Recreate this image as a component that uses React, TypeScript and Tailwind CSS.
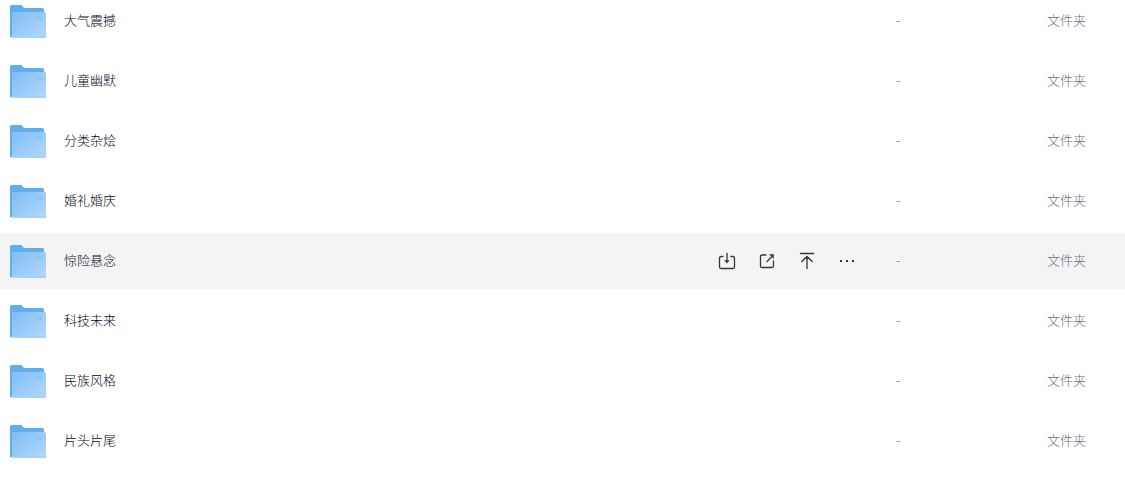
import React from "react";

const folders = [
  "大气震撼",
  "儿童幽默",
  "分类杂烩",
  "婚礼婚庆",
  "惊险悬念",
  "科技未来",
  "民族风格",
  "片头片尾",
];

const activeFolder = "惊险悬念";

const FolderIcon = () => {
  return (
    <svg width="36" height="34" viewBox="0 -1 36 34" className="shrink-0" aria-hidden="true">
      <defs>
        <linearGradient id="folder-front" x1="0" y1="0" x2="1" y2="1">
          <stop offset="0" stopColor="#7fbdf3" />
          <stop offset="1" stopColor="#b3d9fb" />
        </linearGradient>
      </defs>
      <path
        d="M0 1.5Q0 0 1.5 0H10.5Q11.8 0 12.6 1.2L14 3H32.5Q34 3 34 4.5V32H2Q0 33 0 31Z"
        fill="#62aeeb"
      />
      <path d="M2 8.5Q2 7 3.5 7H34.5Q36 7 36 8.5V31.5Q36 33 34.5 33H2Z" fill="url(#folder-front)" />
      <path d="M2 31H36V31.5Q36 33 34.5 33H2Z" fill="#a3d2f9" />
      <path d="M27 12.5H32M27 14.5H32" stroke="#82bff2" strokeWidth="1" />
    </svg>
  );
};

const iconProps = {
  width: 18,
  height: 18,
  viewBox: "0 0 18 18",
  fill: "none",
  stroke: "#33353f",
  strokeWidth: 1.3,
  strokeLinecap: "round" as const,
  strokeLinejoin: "round" as const,
};

const actions = [
  {
    label: "下载",
    icon: (
      <svg {...iconProps}>
        <path d="M5 4.5H3Q1.5 4.5 1.5 6V15Q1.5 16.5 3 16.5H15Q16.5 16.5 16.5 15V6Q16.5 4.5 15 4.5H13" />
        <path d="M9 1.5V9" />
        <path d="M7 8.5H11L9 11Z" fill="#33353f" strokeWidth="0.6" />
      </svg>
    ),
  },
  {
    label: "分享",
    icon: (
      <svg {...iconProps}>
        <path d="M8 3H4Q2.5 3 2.5 4.5V14Q2.5 15.5 4 15.5H14Q15.5 15.5 15.5 14V9" />
        <path d="M9 9.5L14 4.5" />
        <path d="M12 2.5H15.5V6Z" fill="#33353f" strokeWidth="0.6" />
      </svg>
    ),
  },
  {
    label: "置顶",
    icon: (
      <svg {...iconProps}>
        <path d="M2.5 1.5H15.5M9 5V16.5M3.8 9.5L9 4.5L14.2 9.5" />
      </svg>
    ),
  },
  {
    label: "更多",
    icon: (
      <svg {...iconProps} stroke="none" fill="#23252f">
        <rect x="2" y="8" width="2" height="2" rx="0.5" />
        <rect x="8" y="8" width="2" height="2" rx="0.5" />
        <rect x="14" y="8" width="2" height="2" rx="0.5" />
      </svg>
    ),
  },
];

const FolderRow = ({ name, active }: { name: string; active: boolean }) => {
  return (
    <tr className={active ? "h-14 bg-[#f4f4f4]" : "h-14"}>
      <td className="p-0">
        <div className="flex items-center pl-2.5 pr-10">
          <FolderIcon />
          <a href="#" className="ml-[18px] pb-0.5 text-[#03081a]">
            {name}
          </a>
          {active && (
            <div className="ml-auto flex gap-[22px]">
              {actions.map((action) => (
                <button key={action.label} type="button" aria-label={action.label} className="cursor-pointer">
                  {action.icon}
                </button>
              ))}
            </div>
          )}
        </div>
      </td>
      <td className="p-0 pb-0.5 text-[#6b7084]">-</td>
      <td className="p-0 pb-0.5 text-[#6b7084]">文件夹</td>
    </tr>
  );
};

const App = () => {
  return (
    <main className="overflow-hidden bg-white font-['Noto_Sans_CJK_SC',sans-serif] text-[13px] leading-5 font-light">
      <table className="-mt-[11px] w-full table-fixed border-separate border-spacing-x-0 border-spacing-y-1 text-left">
        <colgroup>
          <col />
          <col className="w-[151px]" />
          <col className="w-[78px]" />
        </colgroup>
        <tbody>
          {folders.map((name) => (
            <FolderRow key={name} name={name} active={name === activeFolder} />
          ))}
        </tbody>
      </table>
    </main>
  );
};

export default App;
